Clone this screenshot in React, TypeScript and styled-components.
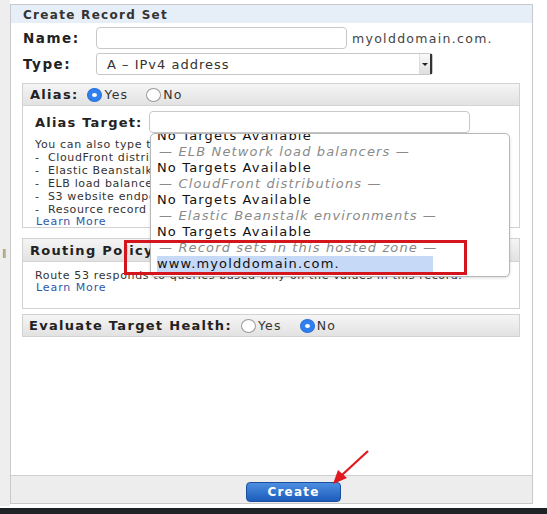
import styled, { createGlobalStyle } from "styled-components";

const GlobalStyle = createGlobalStyle`
  html, body {
    margin: 0;
    padding: 0;
    background: #ffffff;
  }
  body {
    font-family: "DejaVu Sans", Verdana, sans-serif;
    color: #222;
  }
`;

const Screen = styled.div`
  position: relative;
  width: 547px;
  height: 514px;
  overflow: hidden;
  display: flex;
  flex-direction: column;
`;

const Main = styled.div`
  display: flex;
  height: 508px;
`;

const SideStrip = styled.div`
  width: 10px;
  background: #eeeeee;
  display: flex;
  align-items: flex-start;
  padding-top: 248px;
  box-sizing: border-box;
  font-size: 9px;
  color: #777;
  padding-left: 2px;
`;

const Panel = styled.div`
  margin-top: 4px;
  width: 523px;
  height: 500px;
  box-sizing: border-box;
  border: 1px solid #c9c9c9;
  display: flex;
  flex-direction: column;
  background: #fff;
`;

const PanelHeader = styled.div`
  height: 18px;
  background: #e6eef8;
  font-size: 12px;
  letter-spacing: 1.3px;
  font-weight: bold;
  color: #333;
  padding-left: 12px;
  line-height: 20px;
`;

const PanelBody = styled.div`
  flex: 1;
  padding: 4px 12px 0 11px;
  display: flex;
  flex-direction: column;
`;

const FieldRow = styled.div`
  display: flex;
  align-items: center;
  height: 22px;
  margin-bottom: 4px;
`;

const FieldLabel = styled.div`
  width: 73px;
  padding-left: 1px;
  font-size: 13.5px;
  letter-spacing: 1.5px;
  font-weight: bold;
  color: #222;
`;

const TextInput = styled.div<{ $w: number }>`
  width: ${(p) => p.$w}px;
  height: 22px;
  box-sizing: border-box;
  border: 1px solid #c8c8c8;
  border-radius: 4px;
  background: #fff;
`;

const Suffix = styled.div`
  margin-left: 5px;
  font-size: 12.5px;
  letter-spacing: 1.3px;
  color: #444;
`;

const Select = styled.div`
  width: 337px;
  height: 22px;
  box-sizing: border-box;
  border: 1px solid #c8c8c8;
  border-radius: 3px;
  display: flex;
  align-items: center;
  font-size: 13px;
  letter-spacing: 1px;
  color: #333;
  padding-left: 10px;
  position: relative;
`;

const SelectArrow = styled.div`
  position: absolute;
  right: 0;
  top: 0;
  width: 13px;
  height: 20px;
  border-left: 1px solid #ddd;
  border-right: 2px solid #333;
  box-sizing: border-box;
  background: linear-gradient(#fafafa, #dedede);
  display: flex;
  align-items: center;
  justify-content: center;
  &::after {
    content: "";
    border-left: 3px solid transparent;
    border-right: 3px solid transparent;
    border-top: 3px solid #222;
  }
`;

const Section = styled.div<{ $h: number; $gap: number }>`
  border: 1px solid #d2d2d2;
  height: ${(p) => p.$h}px;
  box-sizing: border-box;
  overflow: hidden;
  margin-top: ${(p) => p.$gap}px;
`;

const SectionHead = styled.div<{ $h: number }>`
  height: ${(p) => p.$h}px;
  background: linear-gradient(#f5f5f5, #e2e2e2);
  border-bottom: 1px solid #d4d4d4;
  display: flex;
  align-items: center;
  padding-left: 7px;
  font-size: 13px;
  letter-spacing: 1.3px;
  font-weight: bold;
  color: #222;
  white-space: nowrap;
`;

const RadioOption = styled.span`
  display: inline-flex;
  align-items: center;
  font-weight: normal;
  font-size: 12.5px;
  letter-spacing: 1.2px;
  color: #333;
  margin-left: 9px;
  & + & {
    margin-left: 18px;
  }
`;

const RadioDot = styled.span<{ $on?: boolean }>`
  width: 15px;
  height: 14px;
  box-sizing: border-box;
  border-radius: 50%;
  margin-right: 2px;
  background: ${(p) => (p.$on ? "#2f7ff0" : "#fff")};
  border: 1px solid ${(p) => (p.$on ? "#2a6fd6" : "#999")};
  display: inline-flex;
  align-items: center;
  justify-content: center;
  &::after {
    content: "";
    display: ${(p) => (p.$on ? "block" : "none")};
    width: 5px;
    height: 4px;
    border-radius: 50%;
    background: #fff;
  }
`;

const SectionBody = styled.div`
  padding: 5px 0 0 12px;
`;

const TargetRow = styled.div`
  display: flex;
  align-items: center;
  height: 22px;
  margin-bottom: 5px;
`;

const TargetLabel = styled.div`
  width: 114px;
  font-size: 13px;
  letter-spacing: 1.2px;
  font-weight: bold;
  white-space: nowrap;
`;

const HelpText = styled.div<{ $top?: number }>`
  margin-top: ${(p) => p.$top ?? 0}px;
  font-size: 11px;
  letter-spacing: 0.65px;
  line-height: 13px;
  color: #333;
  white-space: nowrap;
`;

const LearnMore = styled.div`
  font-size: 11px;
  letter-spacing: 0.9px;
  line-height: 12px;
  color: #2f57a8;
  padding-left: 1px;
`;

const HealthBar = styled.div`
  margin-top: 5px;
  height: 23px;
  box-sizing: border-box;
  border: 1px solid #d2d2d2;
  background: linear-gradient(#f5f5f5, #e2e2e2);
  display: flex;
  align-items: center;
  padding-left: 6px;
  font-size: 13px;
  letter-spacing: 1.3px;
  font-weight: bold;
  white-space: nowrap;
`;

const Footer = styled.div`
  height: 27px;
  background: #ededed;
  border-top: 1px solid #cfcfcf;
  display: flex;
  align-items: flex-end;
  padding-left: 235px;
`;

const CreateButton = styled.div`
  width: 95px;
  height: 20px;
  margin-bottom: 1px;
  border-radius: 4px;
  background: linear-gradient(#4c8ee0, #1d5cbc);
  border: 1px solid #1a4f9e;
  box-sizing: border-box;
  color: #fff;
  font-size: 12px;
  letter-spacing: 1.2px;
  font-weight: bold;
  display: flex;
  align-items: center;
  justify-content: center;
`;

const BottomBand = styled.div`
  margin-top: 2px;
  height: 6px;
  background: #1d2226;
`;

const Dropdown = styled.div`
  position: absolute;
  left: 150px;
  top: 133px;
  width: 360px;
  height: 144px;
  box-sizing: border-box;
  border: 1px solid #b8b8b8;
  border-radius: 5px;
  background: #fff;
  overflow: hidden;
  box-shadow: 0 1px 3px rgba(0, 0, 0, 0.15);
`;

const DropList = styled.div`
  margin-top: -6px;
  padding-left: 6px;
`;

const DropItem = styled.div<{ $group?: boolean; $active?: boolean }>`
  height: 16px;
  line-height: 16px;
  width: 276px;
  font-size: 13px;
  letter-spacing: 1.15px;
  white-space: nowrap;
  color: ${(p) => (p.$group ? "#8a8a8a" : "#111")};
  font-style: ${(p) => (p.$group ? "italic" : "normal")};
  background: ${(p) => (p.$active ? "#c6d9f7" : "transparent")};
  padding-left: ${(p) => (p.$group ? 2 : 0)}px;
`;

const Highlight = styled.div`
  position: absolute;
  left: 124px;
  top: 240px;
  width: 343px;
  height: 35px;
  box-sizing: border-box;
  border: 3px solid #d4151c;
`;

const Arrow = styled.svg`
  position: absolute;
  left: 326px;
  top: 448px;
`;

const items: { text: string; group?: boolean; active?: boolean }[] = [
  { text: "No Targets Available" },
  { text: "— ELB Network load balancers —", group: true },
  { text: "No Targets Available" },
  { text: "— CloudFront distributions —", group: true },
  { text: "No Targets Available" },
  { text: "— Elastic Beanstalk environments —", group: true },
  { text: "No Targets Available" },
  { text: "— Record sets in this hosted zone —", group: true },
  { text: "www.myolddomain.com.", active: true },
];

export default function App() {
  return (
    <Screen>
      <GlobalStyle />
      <Main>
        <SideStrip>‖</SideStrip>
        <Panel>
          <PanelHeader>Create Record Set</PanelHeader>
          <PanelBody>
            <FieldRow>
              <FieldLabel>Name:</FieldLabel>
              <TextInput $w={251} />
              <Suffix>myolddomain.com.</Suffix>
            </FieldRow>
            <FieldRow>
              <FieldLabel>Type:</FieldLabel>
              <Select>
                A – IPv4 address
                <SelectArrow />
              </Select>
            </FieldRow>
            <Section $h={145} $gap={4}>
              <SectionHead $h={21}>
                Alias:
                <RadioOption>
                  <RadioDot $on />
                  Yes
                </RadioOption>
                <RadioOption>
                  <RadioDot />
                  No
                </RadioOption>
              </SectionHead>
              <SectionBody>
                <TargetRow>
                  <TargetLabel>Alias Target:</TargetLabel>
                  <TextInput $w={321} />
                </TargetRow>
                <HelpText>You can also type the domain name for the resource. Examples:</HelpText>
                <HelpText>-&nbsp; CloudFront distribution domain name: d111111abcdef8.cloudfront.net</HelpText>
                <HelpText>-&nbsp; Elastic Beanstalk environment CNAME: example.elasticbeanstalk.com</HelpText>
                <HelpText>-&nbsp; ELB load balancer DNS name: example-1.us-east-2.elb.amazonaws.com</HelpText>
                <HelpText>-&nbsp; S3 website endpoint: s3-website.us-east-2.amazonaws.com</HelpText>
                <HelpText>-&nbsp; Resource record set in this hosted zone: www.example.com</HelpText>
                <LearnMore>Learn More</LearnMore>
              </SectionBody>
            </Section>
            <Section $h={71} $gap={10}>
              <SectionHead $h={22}>Routing Policy: Simple</SectionHead>
              <SectionBody>
                <HelpText $top={2}>
                  Route 53 responds to queries based only on the values in this record.
                </HelpText>
                <LearnMore>Learn More</LearnMore>
              </SectionBody>
            </Section>
            <HealthBar>
              Evaluate Target Health:
              <RadioOption>
                <RadioDot />
                Yes
              </RadioOption>
              <RadioOption>
                <RadioDot $on />
                No
              </RadioOption>
            </HealthBar>
          </PanelBody>
          <Footer>
            <CreateButton>Create</CreateButton>
          </Footer>
        </Panel>
      </Main>
      <BottomBand />
      <Dropdown>
        <DropList>
          {items.map((it, i) => (
            <DropItem key={i} $group={it.group} $active={it.active}>
              {it.text}
            </DropItem>
          ))}
        </DropList>
      </Dropdown>
      <Highlight />
      <Arrow width="46" height="40" viewBox="0 0 46 40">
        <line x1="42" y1="3" x2="16" y2="27" stroke="#e0191f" strokeWidth="2.2" />
        <polygon points="7,36 12,22 21,30" fill="#e0191f" />
      </Arrow>
    </Screen>
  );
}
